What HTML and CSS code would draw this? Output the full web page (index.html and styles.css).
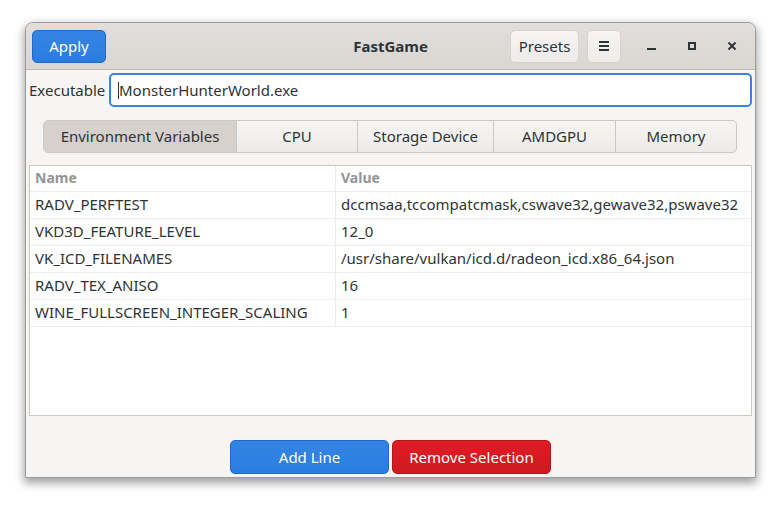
FILE: index.html
```html
<!DOCTYPE html>
<html>
<head>
<meta charset="utf-8">
<link rel="stylesheet" href="styles.css">
</head>
<body>
<div class="window">
  <header class="headerbar">
    <button class="btn btn-suggested apply">Apply</button>
    <div class="title">FastGame</div>
    <div class="hb-right">
      <button class="btn presets">Presets</button>
      <button class="btn menu" aria-label="Menu">
        <svg width="14" height="14" viewBox="0 0 14 14"><path d="M2 3h10M2 7h10M2 11h10" stroke="#2e3436" stroke-width="2"/></svg>
      </button>
      <div class="wm">
        <span class="wm-btn"><svg width="12" height="12" viewBox="0 0 12 12"><path d="M1 9h9" stroke="#2e3436" stroke-width="2"/></svg></span>
        <span class="wm-btn"><svg width="12" height="12" viewBox="0 0 12 12"><rect x="3" y="3" width="6" height="6" fill="none" stroke="#2e3436" stroke-width="2"/></svg></span>
        <span class="wm-btn"><svg width="12" height="12" viewBox="0 0 12 12"><path d="M2.5 2.5l7 7M9.5 2.5l-7 7" stroke="#2e3436" stroke-width="2"/></svg></span>
      </div>
    </div>
  </header>
  <div class="content">
    <div class="exec-row">
      <label class="exec-label">Executable</label>
      <div class="entry"><span class="cursor"></span>MonsterHunterWorld.exe</div>
    </div>
    <div class="tabs">
      <div class="tab active t1">Environment Variables</div>
      <div class="tab t2">CPU</div>
      <div class="tab t3">Storage Device</div>
      <div class="tab t4">AMDGPU</div>
      <div class="tab t5">Memory</div>
    </div>
    <div class="table">
      <div class="row head"><div class="c1">Name</div><div class="c2">Value</div></div>
      <div class="row"><div class="c1">RADV_PERFTEST</div><div class="c2">dccmsaa,tccompatcmask,cswave32,gewave32,pswave32</div></div>
      <div class="row"><div class="c1">VKD3D_FEATURE_LEVEL</div><div class="c2">12_0</div></div>
      <div class="row"><div class="c1">VK_ICD_FILENAMES</div><div class="c2">/usr/share/vulkan/icd.d/radeon_icd.x86_64.json</div></div>
      <div class="row"><div class="c1">RADV_TEX_ANISO</div><div class="c2">16</div></div>
      <div class="row"><div class="c1">WINE_FULLSCREEN_INTEGER_SCALING</div><div class="c2">1</div></div>
    </div>
    <div class="actions">
      <button class="btn btn-suggested wide">Add Line</button>
      <button class="btn btn-destructive wide">Remove Selection</button>
    </div>
  </div>
</div>
</body>
</html>
```
FILE: styles.css
```css
* { box-sizing: border-box; }
html, body { margin: 0; padding: 0; background: #ffffff; }
body {
  font-family: "Noto Sans", "Open Sans", sans-serif;
  font-size: 15px;
  color: #2e3436;
  width: 781px;
  height: 506px;
  overflow: hidden;
}
.window {
  margin: 22px 0 0 25px;
  width: 731px;
  height: 456px;
  border: 1px solid #9b9b9b;
  border-radius: 8px 8px 0 0;
  background: #f6f5f4;
  box-shadow: 0 4px 10px 1px rgba(0,0,0,0.38);
  display: flex;
  flex-direction: column;
  overflow: hidden;
}
.headerbar {
  height: 47px;
  flex: none;
  background: linear-gradient(#e1dedb, #dad6d2);
  border-bottom: 1px solid #bfb8b1;
  display: flex;
  align-items: center;
  padding: 0 0 0 6px;
  position: relative;
}
.btn {
  font-family: inherit;
  font-size: 15px;
  height: 33px;
  border-radius: 5px;
  border: 1px solid #cdc7c2;
  background: linear-gradient(#f6f5f4, #edebe9);
  color: #2e3436;
  padding: 0 0 1px 0;
  display: inline-flex;
  align-items: center;
  justify-content: center;
}
.btn-suggested {
  background: linear-gradient(#3584e4, #2a7de0);
  border-color: #1b6acb;
  color: #ffffff;
}
.btn-destructive {
  background: linear-gradient(#e01b24, #cf1921);
  border-color: #b2161d;
  color: #ffffff;
}
.apply { width: 74px; }
.title {
  position: absolute;
  left: 0; right: 0;
  text-align: center;
  font-weight: bold;
  pointer-events: none;
  top: 13px;
}
.hb-right {
  margin-left: auto;
  display: flex;
  align-items: center;
}
.presets {
  width: 69px;
  border-color: #d7d2ce;
}
.menu {
  width: 34px;
  margin-left: 8px;
  border-color: #d7d2ce;
}
.menu svg { display: block; }
.wm {
  display: flex;
  margin-left: 11px;
  margin-right: 3px;
}
.wm-btn {
  width: 40px;
  height: 33px;
  display: flex;
  align-items: center;
  justify-content: center;
}
.wm-btn svg { display: block; }
.content {
  flex: 1;
  display: flex;
  flex-direction: column;
  padding: 3px 3px 3px 3px;
}
.exec-row {
  display: flex;
  align-items: center;
  height: 34px;
}
.exec-label {
  width: 80px;
  padding-left: 0;
  flex: none;
}
.entry {
  flex: 1;
  height: 34px;
  border: 2px solid #3584e4;
  border-radius: 5px;
  background: #ffffff;
  display: flex;
  align-items: center;
  padding-left: 7px;
}
.cursor {
  display: inline-block;
  width: 1px;
  height: 17px;
  background: #2e3436;
}
.tabs {
  margin: 13px 15px 0 14px;
  height: 33px;
  display: grid;
  grid-template-columns: 192px 121px 136px 122px 1fr;
  border: 1px solid #cdc7c2;
  border-radius: 5px;
  background: linear-gradient(#f6f5f4, #edebe9);
  overflow: hidden;
}
.tab {
  display: flex;
  align-items: center;
  justify-content: center;
  padding-bottom: 2px;
  border-left: 1px solid #cdc7c2;
}
.tab.t1 { border-left: none; }
.tab.active { background: #d6d1cd; }
.table {
  margin-top: 12px;
  height: 251px;
  border: 1px solid #cdc7c2;
  background: #ffffff;
  flex: none;
}
.row {
  display: grid;
  grid-template-columns: 306px 1fr;
  height: 27px;
  border-bottom: 1px solid #ececec;
  align-items: stretch;
}
.row > div {
  display: flex;
  align-items: center;
  padding: 0 0 2px 5px;
  white-space: nowrap;
}
.row .c1 { border-right: 1px solid #ececec; }
.row.head { height: 26px; }
.row.head > div {
  color: #929595;
  font-weight: bold;
  font-size: 14px;
}
.actions {
  margin-top: auto;
  display: flex;
  justify-content: center;
  gap: 3px;
}
.wide { width: 159px; height: 34px; }
```
